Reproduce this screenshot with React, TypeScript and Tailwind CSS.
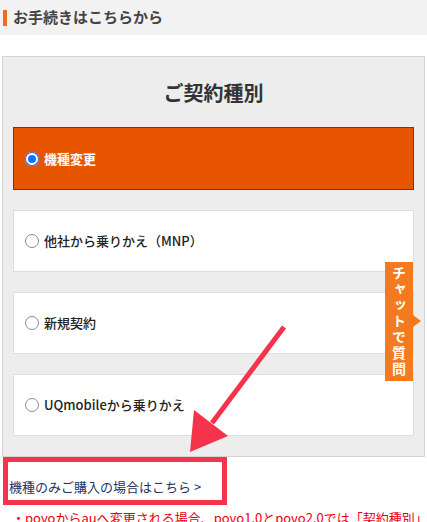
import { useState } from "react";

const options = [
  "機種変更",
  "他社から乗りかえ（MNP）",
  "新規契約",
  "UQmobileから乗りかえ",
];

function Radio({ checked }: { checked: boolean }) {
  return checked ? (
    <span className="flex h-[14px] w-[14px] shrink-0 items-center justify-center rounded-full bg-white">
      <span className="h-[12px] w-[12px] rounded-full border-[2.5px] border-white bg-[#1a6ef0] shadow-[0_0_0_1px_#1a6ef0]" />
    </span>
  ) : (
    <span className="h-[14px] w-[14px] shrink-0 rounded-full border border-[#8a8a8a] bg-white" />
  );
}

export default function App() {
  const [selected, setSelected] = useState(0);

  return (
    <div className="relative h-[522px] w-[427px] overflow-hidden bg-white font-['Noto_Sans_CJK_JP','Noto_Sans',sans-serif]">
      {/* heading */}
      <div className="flex h-[35px] items-center bg-[#f2f2f2] pl-[3px]">
        <span className="h-[16px] w-[4px] bg-[#f26b21]" />
        <h2 className="ml-[6px] text-[15px] font-bold text-[#444]">お手続きはこちらから</h2>
      </div>

      {/* contract type */}
      <div className="mx-[2px] mt-[21px] border border-[#d4d4d4] bg-[#ededed] px-[10px] pb-[20px]">
        <h1 className="pt-[20px] pb-[18px] text-center text-[20px] font-bold leading-[32px] text-[#333]">
          ご契約種別
        </h1>
        <div className="flex flex-col gap-[20px]">
          {options.map((label, i) => (
            <button
              key={label}
              onClick={() => setSelected(i)}
              className={
                i === selected
                  ? "flex h-[63px] items-center gap-[5px] border border-[#7a3510] bg-[#e85500] pl-[11px] text-left"
                  : "flex h-[62px] items-center gap-[5px] border border-[#dedede] bg-white pl-[11px] text-left"
              }
            >
              <Radio checked={i === selected} />
              <span
                className={
                  i === selected
                    ? "text-[13px] font-bold text-white"
                    : "text-[13px] font-medium text-[#222]"
                }
              >
                {label}
              </span>
            </button>
          ))}
        </div>
      </div>

      {/* device only link */}
      <div className="relative h-[52px]">
        <a className="absolute top-[21px] left-[9px] text-[13px] leading-[18px] text-[#25335f]">
          機種のみご購入の場合はこちら &gt;
        </a>
        <span className="absolute top-0 left-[3px] h-[48px] w-[224px] border-[5px] border-[#f5334a]" />
      </div>
      <p className="pl-[12px] text-[13px] leading-[18px] whitespace-nowrap text-[#e60012]">
        ・povoからauへ変更される場合、povo1.0とpovo2.0では「契約種別」の
      </p>

      {/* chat tab */}
      <div className="absolute top-[262px] left-[385px] flex h-[119px] w-[28px] items-center justify-center bg-[#f47a20]">
        <span className="text-[14px] leading-[28px] font-bold tracking-[2px] text-white [writing-mode:vertical-rl]">
          チャットで質問
        </span>
        <span className="absolute top-[53px] -right-[8px] h-0 w-0 border-y-[6px] border-l-[8px] border-y-transparent border-l-[#f47a20]" />
      </div>

      {/* annotation arrow */}
      <svg className="pointer-events-none absolute top-0 left-0" width="427" height="522">
        <line x1="284" y1="327" x2="212" y2="423" stroke="#f5334a" strokeWidth="5" />
        <polygon points="190,452 194,410 228,436" fill="#f5334a" />
      </svg>
    </div>
  );
}
